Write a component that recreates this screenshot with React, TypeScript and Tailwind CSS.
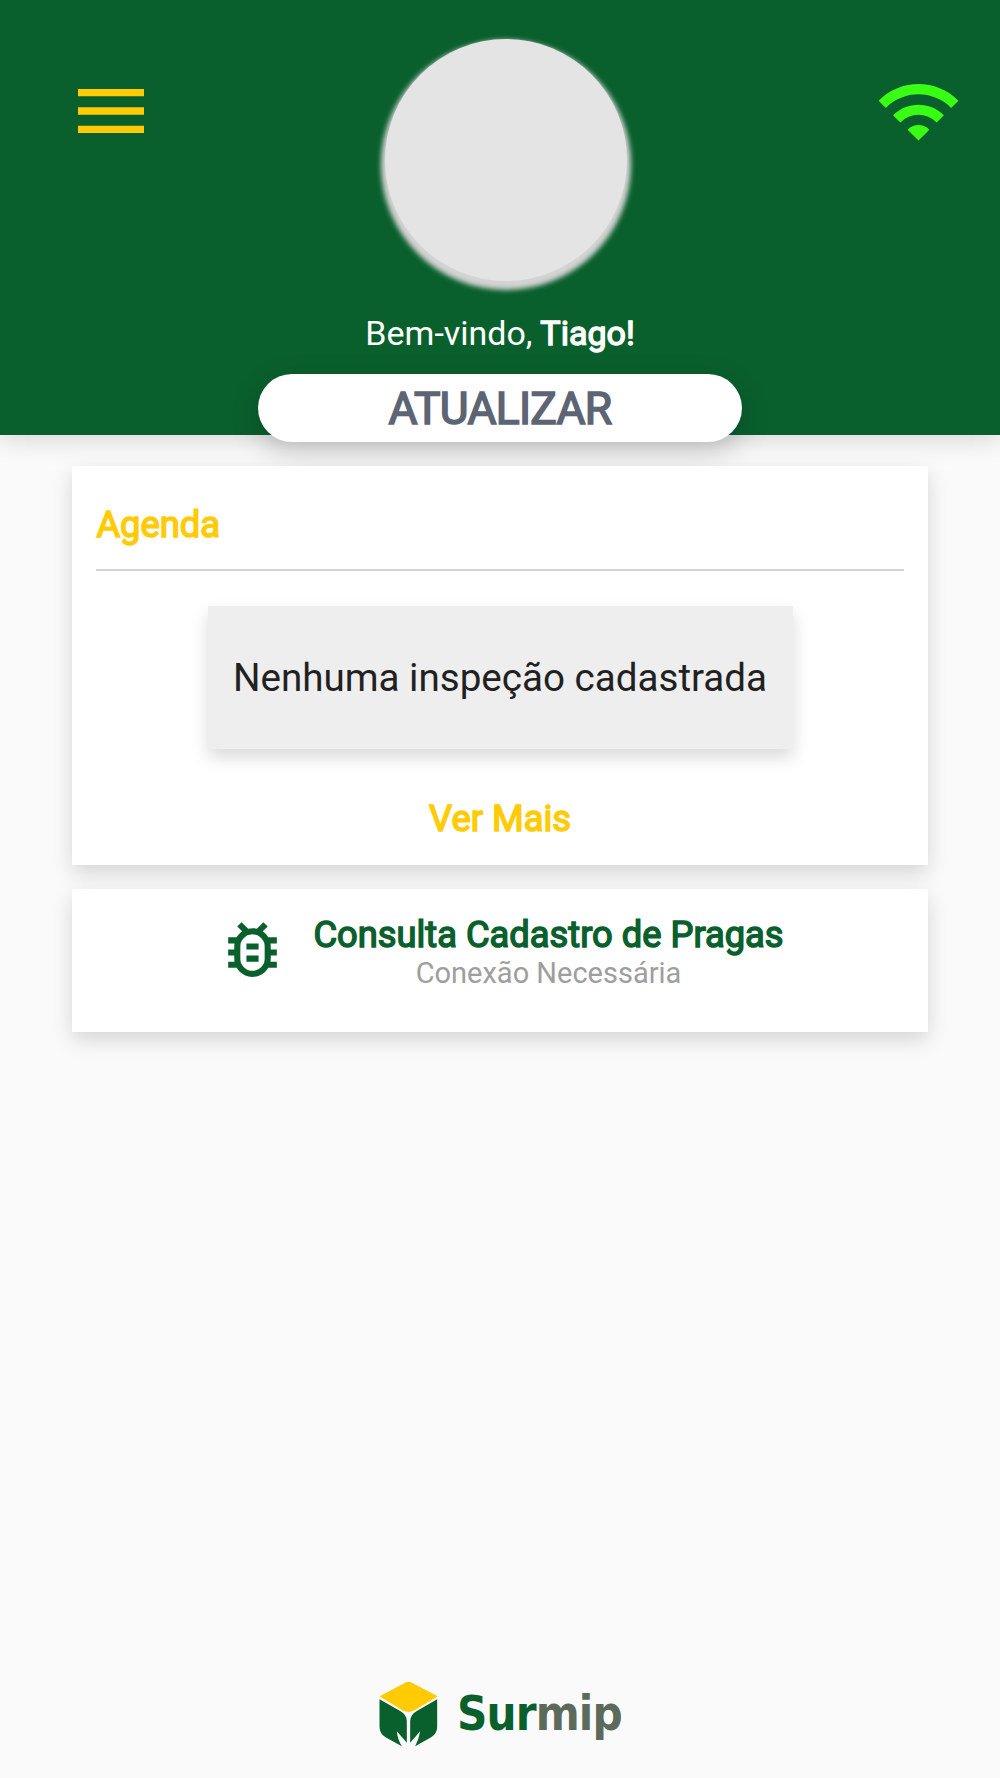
import { MdMenu, MdOutlineBugReport, MdWifi } from 'react-icons/md'

function SurmipLogo() {
  return (
    <div className="flex items-start">
      <svg viewBox="57 63 176 198" className="h-[66px] w-[59px]">
        <path
          fill="#ffcb05"
          d="M135 68Q145 63 155 68L230 107Q233 109 230 111L163 151Q145 161 127 151L61 111Q58 109 61 107Z"
        />
        <path
          fill="#0a602d"
          d="M58 118L120 153Q140 164 140 184V248L110 214Q112 238 125 259L76 232Q58 220 58 200Z"
        />
        <path
          fill="#0a602d"
          d="M231 118L170 153Q150 164 150 184V248L180 214Q176 238 165 259L213 232Q231 220 231 200Z"
        />
      </svg>
      <p className="ml-[19px] mt-1 origin-left scale-x-[0.88] font-['DejaVu_Sans'] text-[48px] font-bold leading-[56px] tracking-[-1px] text-[#0a602d]">
        Sur<span className="text-[#5c6a5b]">mip</span>
      </p>
    </div>
  )
}

function Header() {
  return (
    <header className="grid h-[435px] grid-cols-[258px_484px_258px] bg-[#0a602d] shadow-[0_6px_24px_rgba(0,0,0,0.13)]">
      <MdMenu className="ml-[67px] mt-[67px] size-[88px] text-[#ffcb05]" />
      <div className="flex flex-col items-center">
        <div className="ml-[11px] mt-[39.4px] size-[242px] shrink-0 rounded-full bg-[#e4e4e4] shadow-[0_5px_5px_4px_#d3d3d3]" />
        <p className="mt-8 whitespace-nowrap text-[34px] leading-10 text-white">
          Bem-vindo,{' '}
          <span className="[-webkit-text-stroke:1.4px_currentColor]">Tiago!</span>
        </p>
        <button className="mt-[21px] h-[67.6px] w-full shrink-0 rounded-full bg-white pt-0.5 text-[44.4px] leading-[66px] tracking-[-0.7px] text-[#5d6474] shadow-[0_8px_28px_rgba(0,0,0,0.22)] [-webkit-text-stroke:1.6px_currentColor]">
          ATUALIZAR
        </button>
      </div>
      <MdWifi className="ml-[133px] mt-[68px] size-[87px] text-[#39ff14]" />
    </header>
  )
}

function AgendaCard() {
  return (
    <section className="flex h-[399px] flex-col items-center bg-white px-6 pt-[35px] shadow-[0_8px_20px_rgba(0,0,0,0.15)]">
      <h2 className="w-full text-[36.3px] leading-12 text-[#ffcb05] [-webkit-text-stroke:1.5px_currentColor]">
        Agenda
      </h2>
      <hr className="mt-5 w-full border-t-2 border-[#d4d4d4]" />
      <div className="mt-[35px] flex h-[143px] w-[585px] shrink-0 items-center justify-center bg-[#eeeeee] text-[38.6px] text-[#212121] shadow-[0_8px_16px_rgba(0,0,0,0.15)]">
        Nenhuma inspeção cadastrada
      </div>
      <button className="mt-[46px] text-[36.3px] leading-12 text-[#ffcb05] [-webkit-text-stroke:1.5px_currentColor]">
        Ver Mais
      </button>
    </section>
  )
}

function PragasCard() {
  return (
    <section className="mt-6 flex h-[143px] bg-white pl-36 pt-[23px] shadow-[0_8px_20px_rgba(0,0,0,0.15)]">
      <MdOutlineBugReport className="mt-px size-[73px] text-[#0a602d]" />
      <div className="ml-6 flex flex-col items-center">
        <h2 className="text-[36.3px] leading-[46px] text-[#0a602d] [-webkit-text-stroke:1.5px_currentColor]">
          Consulta Cadastro de Pragas
        </h2>
        <p className="-mt-1 text-[29px] leading-[38px] text-[#9e9e9e]">Conexão Necessária</p>
      </div>
    </section>
  )
}

export default function App() {
  return (
    <div className="flex h-[1778px] w-[1000px] flex-col overflow-hidden bg-[#fafafa] font-[Roboto,sans-serif]">
      <Header />
      <main className="flex-1 px-[72.4px] pt-[31px]">
        <AgendaCard />
        <PragasCard />
      </main>
      <footer className="flex h-[97px] pl-[379px]">
        <SurmipLogo />
      </footer>
    </div>
  )
}
